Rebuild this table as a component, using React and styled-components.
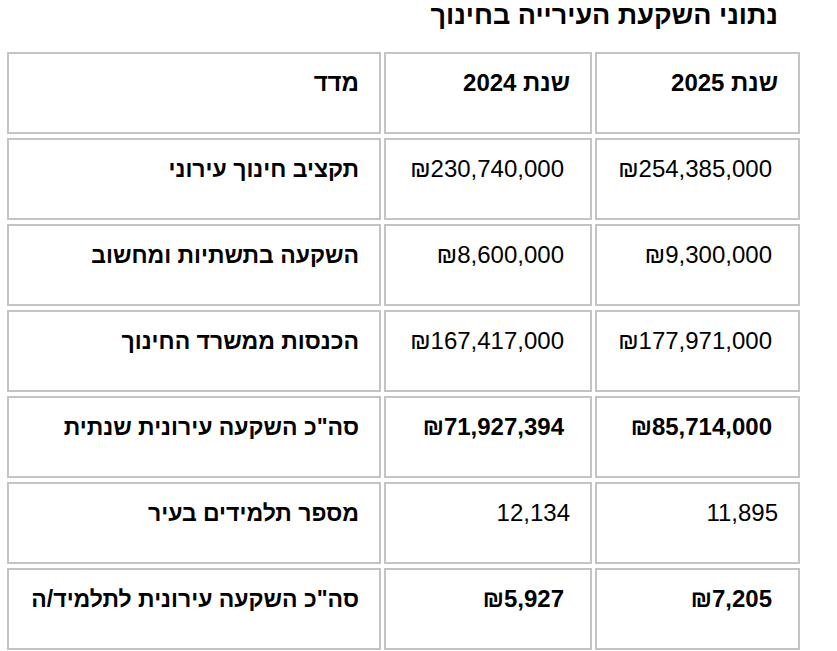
import React from "react";
import styled, { createGlobalStyle } from "styled-components";

const GlobalStyle = createGlobalStyle`
  html, body {
    margin: 0;
    padding: 0;
    background: #fff;
  }
  body {
    font-family: "Liberation Sans", Arial, sans-serif;
    color: #000;
  }
`;

const Page = styled.div`
  width: 837px;
  direction: rtl;
  padding: 0 34px 0 4px;
  box-sizing: border-box;
`;

const Title = styled.h2`
  margin: 0;
  padding: 0 25px 0 0;
  height: 49px;
  font-size: 27px;
  line-height: 30px;
  font-weight: bold;
`;

const Table = styled.table`
  width: 799px;
  table-layout: fixed;
  border-collapse: separate;
  border-spacing: 3px 4px;
  margin-top: -1px;
`;

const Cell = styled.td`
  border: 2px solid #c4c4c4;
  height: 82px;
  box-sizing: border-box;
  padding: 15px 20px 0 20px;
  vertical-align: top;
  text-align: right;
  font-size: ${({ $size }) => $size || "24px"};
  line-height: 28px;
  font-weight: ${({ $bold }) => ($bold ? "bold" : "normal")};
  width: ${({ $w }) => $w || "auto"};
  white-space: nowrap;
  overflow: hidden;
`;

const Money = styled.span`
  display: inline-block;
  direction: ltr;
  padding-right: 6px;
`;

const rows = [
  { label: "תקציב חינוך עירוני", y25: "254,385,000", y24: "230,740,000", money: true },
  { label: "השקעה בתשתיות ומחשוב", y25: "9,300,000", y24: "8,600,000", money: true },
  { label: "הכנסות ממשרד החינוך", y25: "177,971,000", y24: "167,417,000", money: true },
  { label: 'סה"כ השקעה עירונית שנתית', y25: "85,714,000", y24: "71,927,394", money: true, bold: true },
  { label: "מספר תלמידים בעיר", y25: "11,895", y24: "12,134" },
  { label: 'סה"כ השקעה עירונית לתלמיד/ה', y25: "7,205", y24: "5,927", money: true, bold: true },
];

const Value = ({ value, money }) => (money ? <Money>₪{value}</Money> : value);

export default function App() {
  return (
    <>
      <GlobalStyle />
      <Page>
        <Title>נתוני השקעת העירייה בחינוך</Title>
        <Table>
          <tbody>
            <tr>
              <Cell $bold $w="205px">שנת 2025</Cell>
              <Cell $bold $w="208px">שנת 2024</Cell>
              <Cell $bold $w="374px">מדד</Cell>
            </tr>
            {rows.map((row) => (
              <tr key={row.label}>
                <Cell $bold={row.bold}>
                  <Value value={row.y25} money={row.money} />
                </Cell>
                <Cell $bold={row.bold}>
                  <Value value={row.y24} money={row.money} />
                </Cell>
                <Cell $bold $size="23px">{row.label}</Cell>
              </tr>
            ))}
          </tbody>
        </Table>
      </Page>
    </>
  );
}
